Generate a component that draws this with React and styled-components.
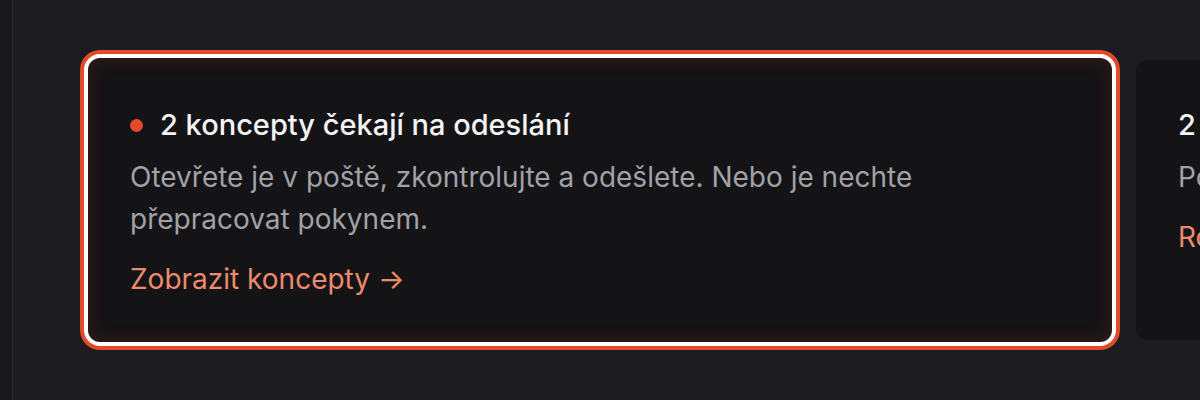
import React from "react";
import styled, { createGlobalStyle } from "styled-components";

const GlobalStyle = createGlobalStyle`
  html, body {
    margin: 0;
    padding: 0;
    background: #1c1b1f;
    overflow: hidden;
  }
  body {
    font-family: Inter, "Noto Sans", "Liberation Sans", sans-serif;
    -webkit-font-smoothing: antialiased;
  }
`;

const Page = styled.div`
  display: flex;
  width: 1200px;
  height: 400px;
  background: #1c1b1f;
`;

const Sidebar = styled.aside`
  flex: 0 0 12px;
  background: #18171a;
  border-right: 1px solid #2c2b30;
`;

const Main = styled.main`
  flex: 1;
  min-width: 0;
  padding: 58px 0 0 75px;
`;

const CardRow = styled.div`
  display: flex;
  align-items: center;
  gap: 24px;
  height: 284px;
`;

const Card = styled.section`
  flex: 0 0 1024px;
  box-sizing: border-box;
  height: ${(p) => (p.$active ? "284px" : "280px")};
  padding: ${(p) => (p.$active ? "50px 42px" : "48px 42px")};
  border-radius: 12px;
  background: #141316;
  box-shadow: ${(p) =>
    p.$active
      ? "0 0 0 4px #ffffff, 0 0 0 8px #e24a2c, inset 0 0 18px rgba(190, 60, 40, 0.22)"
      : "none"};
`;

const Title = styled.h3`
  display: flex;
  align-items: center;
  gap: 17px;
  margin: 0;
  font-size: 29px;
  line-height: 34px;
  font-weight: 500;
  color: #f4f4f5;
  white-space: nowrap;
`;

const Dot = styled.span`
  flex: 0 0 13px;
  height: 13px;
  border-radius: 50%;
  background: #e24a2c;
`;

const Text = styled.p`
  margin: 14px 0 0;
  max-width: 820px;
  font-size: 28px;
  line-height: 42px;
  font-weight: 400;
  color: #a1a1a8;
`;

const Link = styled.a`
  display: inline-block;
  margin-top: 22px;
  font-size: 28px;
  line-height: 34px;
  color: #ec8b6c;
  text-decoration: none;
  white-space: nowrap;
`;

export default function App() {
  return (
    <>
      <GlobalStyle />
      <Page>
        <Sidebar />
        <Main>
          <CardRow>
            <Card $active>
              <Title>
                <Dot />
                2 koncepty čekají na odeslání
              </Title>
              <Text>
                Otevřete je v poště, zkontrolujte a odešlete. Nebo je nechte
                přepracovat pokynem.
              </Text>
              <Link href="#">Zobrazit koncepty →</Link>
            </Card>
            <Card>
              <Title>2 schůzky čekají na potvrzení</Title>
              <Text>Potvrďte navržené termíny, nebo je přesuňte.</Text>
              <Link href="#">Rozhodnout →</Link>
            </Card>
          </CardRow>
        </Main>
      </Page>
    </>
  );
}
